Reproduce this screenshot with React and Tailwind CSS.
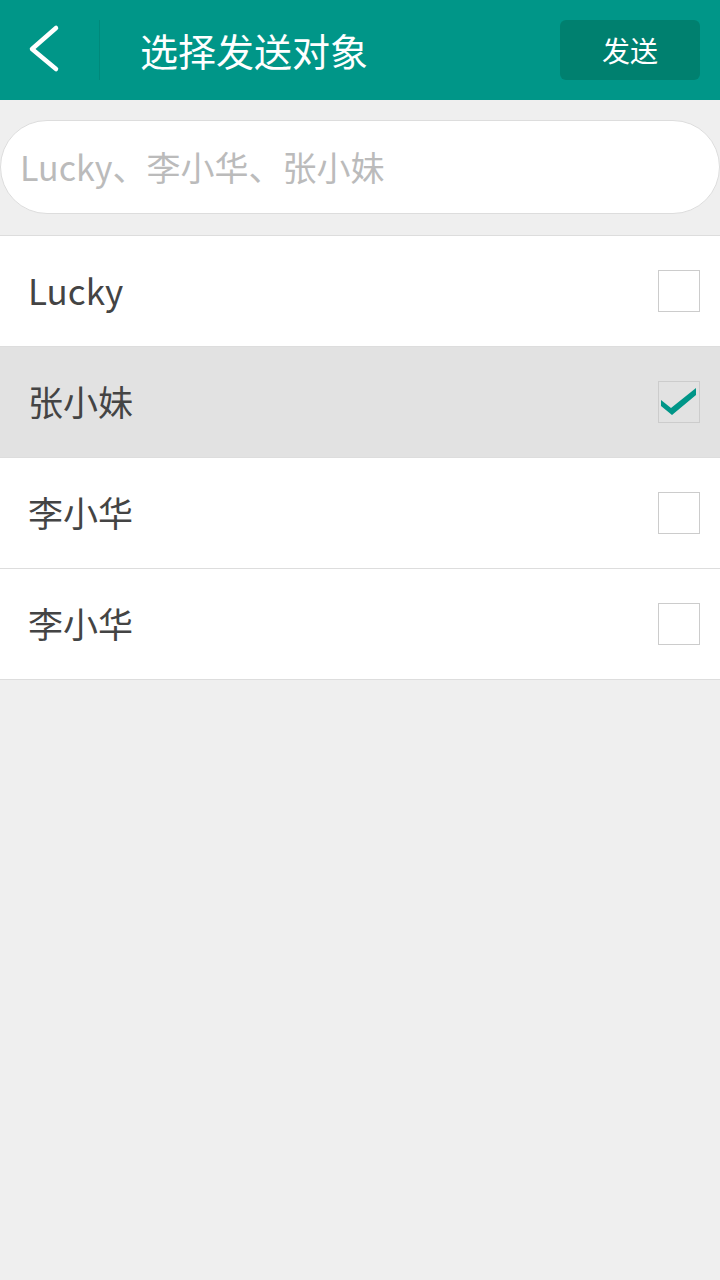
export default function App() {
  const rows = [
    { name: "Lucky", checked: false },
    { name: "张小妹", checked: true },
    { name: "李小华", checked: false },
    { name: "李小华", checked: false },
  ];
  const font = { fontFamily: '"Noto Sans CJK SC", "Noto Sans", sans-serif' };
  return (
    <div className="w-[720px] h-[1280px] bg-[#efefef]" style={font}>
      <div className="h-[100px] bg-[#009688] flex items-center">
        <div className="w-[99px] h-full flex items-center">
          <svg width="99" height="100" viewBox="0 0 99 100">
            <path d="M56 28 L32 49 L56 69" fill="none" stroke="#fff" strokeWidth="4.5" strokeLinecap="round" strokeLinejoin="round" />
          </svg>
        </div>
        <div className="w-px h-[60px] bg-[#00897b]" />
        <div className="flex-1 pl-[40px] text-white text-[38px] leading-none">选择发送对象</div>
        <div className="mr-[20px] w-[140px] h-[60px] rounded-[6px] bg-[#00806f] flex items-center justify-center text-white text-[28px] leading-none">发送</div>
      </div>
      <div className="pt-[20px] pb-[21px]">
        <div className="h-[94px] bg-white rounded-full border border-[#dddddd] flex items-center pl-[19px] text-[34px] text-[#bbbbbb] leading-none">
          Lucky、李小华、张小妹
        </div>
      </div>
      <div className="border-t border-[#dddddd]">
        {rows.map((r, i) => (
          <div
            key={i}
            className={`h-[111px] flex items-center justify-between pl-[28px] pr-[20px] border-b border-[#dddddd] ${r.checked ? "bg-[#e2e2e2]" : "bg-white"}`}
          >
            <span className="text-[35px] text-[#444444] leading-none -mt-[3px]">{r.name}</span>
            <div className="w-[42px] h-[42px] border border-[#cccccc] flex items-center justify-center">
              {r.checked && (
                <svg width="40" height="40" viewBox="0 0 40 40">
                  <path d="M2 18 L12 26 L37 6 L37 13 L13 33 L2 24 Z" fill="#009688" />
                </svg>
              )}
            </div>
          </div>
        ))}
      </div>
    </div>
  );
}
